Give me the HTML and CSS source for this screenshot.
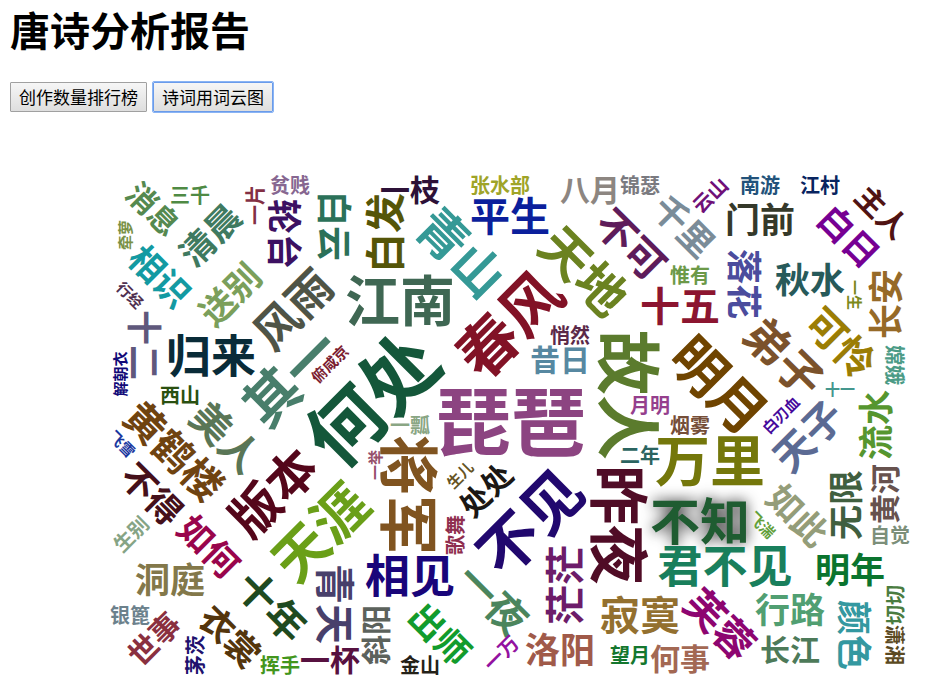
FILE: index.html
```html
<!DOCTYPE html>
<html lang="zh-CN">
<head>
<meta charset="utf-8">
<title>唐诗分析报告</title>
<link rel="stylesheet" href="styles.css">
</head>
<body>
<h1>唐诗分析报告</h1>
<div class="toolbar">
<button type="button" class="tab">创作数量排行榜</button>
<button type="button" class="tab tab-active">诗词用词云图</button>
</div>
<svg class="cloud" viewBox="10 130 918 552" role="img" aria-label="诗词用词云图">
<text dy=".38em" font-size="30" fill="#55894f" transform="translate(153 209) rotate(45)">消息</text>
<text dy=".38em" font-size="20" fill="#4f8a44" transform="translate(190 195)">三千</text>
<text dy=".38em" font-size="20" fill="#832f44" transform="translate(255 205) rotate(-90)">一片</text>
<text dy=".38em" font-size="20" fill="#876791" transform="translate(290 185)">贫贱</text>
<text dy=".38em" font-size="35" fill="#3f7a60" transform="translate(210 235) rotate(-45)">清晨</text>
<text dy=".38em" font-size="15" fill="#7a9146" transform="translate(125 235) rotate(-90)">牵萝</text>
<text dy=".38em" font-size="35" fill="#139aa2" transform="translate(160 276) rotate(45)">相识</text>
<text dy=".38em" font-size="35" fill="#7b9f5b" transform="translate(230 294) rotate(-45)">送别</text>
<text dy=".38em" font-size="15" fill="#503050" transform="translate(130 295) rotate(45)">行经</text>
<text dy=".38em" font-size="35" fill="#5f587c" transform="translate(144 345) rotate(90)">十二</text>
<text dy=".38em" font-size="35" fill="#3c1162" transform="translate(284 234) rotate(90)">轮台</text>
<text dy=".38em" font-size="45" fill="#4f5446" transform="translate(293 309) rotate(-45)">风雨</text>
<text dy=".38em" font-size="35" fill="#2b7159" transform="translate(334 226) rotate(90)">白云</text>
<text dy=".38em" font-size="40" fill="#555508" transform="translate(385 233) rotate(-90)">白发</text>
<text dy=".38em" font-size="30" fill="#2d1138" transform="translate(410 190)">一枝</text>
<text dy=".38em" font-size="20" fill="#9fa428" transform="translate(500 185)">张水部</text>
<text dy=".38em" font-size="50" fill="#359996" transform="translate(461 252) rotate(45)">青山</text>
<text dy=".38em" font-size="40" fill="#0b1f9c" transform="translate(510 216)">平生</text>
<text dy=".38em" font-size="55" fill="#3f6753" transform="translate(400 300)">江南</text>
<text dy=".38em" font-size="60" fill="#821226" transform="translate(509 324) rotate(-45)">春风</text>
<text dy=".38em" font-size="30" fill="#8d8681" transform="translate(590 190)">八月</text>
<text dy=".38em" font-size="20" fill="#7a7a80" transform="translate(640 185)">锦瑟</text>
<text dy=".38em" font-size="35" fill="#7b8c98" transform="translate(684 226) rotate(45)">千里</text>
<text dy=".38em" font-size="20" fill="#6f1078" transform="translate(710 195) rotate(-45)">云山</text>
<text dy=".38em" font-size="40" fill="#5e1c5a" transform="translate(631 244) rotate(45)">不可</text>
<text dy=".38em" font-size="50" fill="#6b8220" transform="translate(584 271) rotate(45)">天地</text>
<text dy=".38em" font-size="20" fill="#6c9948" transform="translate(690 275)">惟有</text>
<text dy=".38em" font-size="40" fill="#8c1530" transform="translate(680 306)">十五</text>
<text dy=".38em" font-size="20" fill="#5b2948" transform="translate(570 335)">悄然</text>
<text dy=".38em" font-size="20" fill="#22527a" transform="translate(760 185)">南游</text>
<text dy=".38em" font-size="20" fill="#082460" transform="translate(820 185)">江村</text>
<text dy=".38em" font-size="35" fill="#35392a" transform="translate(760 220)">门前</text>
<text dy=".38em" font-size="35" fill="#760093" transform="translate(849 236) rotate(45)">白日</text>
<text dy=".38em" font-size="30" fill="#501313" transform="translate(882 212) rotate(45)">主人</text>
<text dy=".38em" font-size="35" fill="#4b4c9d" transform="translate(744 284) rotate(90)">落花</text>
<text dy=".38em" font-size="35" fill="#275a5a" transform="translate(810 280)">秋水</text>
<text dy=".38em" font-size="15" fill="#7b8a1b" transform="translate(855 295) rotate(90)">一生</text>
<text dy=".38em" font-size="35" fill="#966a28" transform="translate(886 304) rotate(-90)">长安</text>
<text dy=".38em" font-size="40" fill="#9b7d04" transform="translate(841 343) rotate(45)">可怜</text>
<text dy=".38em" font-size="45" fill="#7b522b" transform="translate(784 357) rotate(45)">弟子</text>
<text dy=".38em" font-size="20" fill="#4b9b86" transform="translate(895 365) rotate(90)">嫦娥</text>
<text dy=".38em" font-size="15" fill="#45978e" transform="translate(840 389)">十一</text>
<text dy=".38em" font-size="45" fill="#092b38" transform="translate(211 356)">归来</text>
<text dy=".38em" font-size="15" fill="#110a78" transform="translate(120 374) rotate(-90)">解朝衣</text>
<text dy=".38em" font-size="20" fill="#2a5010" transform="translate(180 395)">西山</text>
<text dy=".38em" font-size="40" fill="#6f4310" transform="translate(174 451) rotate(45)">黄鹤楼</text>
<text dy=".38em" font-size="40" fill="#5a7656" transform="translate(226 437) rotate(45)">美人</text>
<text dy=".38em" font-size="15" fill="#1a38a0" transform="translate(122 444) rotate(45)">飞雪</text>
<text dy=".38em" font-size="35" fill="#45101a" transform="translate(152 494) rotate(45)">不得</text>
<text dy=".38em" font-size="50" fill="#54061a" transform="translate(273 492) rotate(-45)">版本</text>
<text dy=".38em" font-size="55" fill="#487e6b" transform="translate(291 377) rotate(-45)">其一</text>
<text dy=".38em" font-size="15" fill="#7b2030" transform="translate(330 364) rotate(-45)">俯咸京</text>
<text dy=".38em" font-size="75" fill="#14573a" transform="translate(372 399) rotate(-45)">何处</text>
<text dy=".38em" font-size="20" fill="#8aa684" transform="translate(410 425)">一瓢</text>
<text dy=".38em" font-size="15" fill="#96506a" transform="translate(375 465) rotate(-90)">一举</text>
<text dy=".38em" font-size="60" fill="#805420" transform="translate(409 495) rotate(90)">将军</text>
<text dy=".38em" font-size="75" fill="#8c4481" transform="translate(511 421)">琵琶</text>
<text dy=".38em" font-size="15" fill="#665423" transform="translate(460 475) rotate(-45)">生儿</text>
<text dy=".38em" font-size="30" fill="#1b1714" transform="translate(486 490) rotate(-45)">处处</text>
<text dy=".38em" font-size="60" fill="#21086e" transform="translate(530 522) rotate(-45)">不见</text>
<text dy=".38em" font-size="30" fill="#5788a1" transform="translate(560 360)">昔日</text>
<text dy=".38em" font-size="65" fill="#5b7b2d" transform="translate(629 395) rotate(90)">故人</text>
<text dy=".38em" font-size="20" fill="#953f8d" transform="translate(650 405)">月明</text>
<text dy=".38em" font-size="20" fill="#754e38" transform="translate(690 425)">烟雾</text>
<text dy=".38em" font-size="20" fill="#2b6460" transform="translate(640 455)">二年</text>
<text dy=".38em" font-size="55" fill="#6f4400" transform="translate(719 385) rotate(45)">明月</text>
<text dy=".38em" font-size="55" fill="#74770b" transform="translate(710 460)">万里</text>
<text dy=".38em" font-size="60" fill="#500c26" transform="translate(619 525) rotate(90)">昨夜</text>
<text class="hovered" dy=".38em" font-size="50" fill="#1f5c31" transform="translate(700 521)">不知</text>
<text dy=".38em" font-size="15" fill="#460a9c" transform="translate(781 415) rotate(-45)">白刃血</text>
<text dy=".38em" font-size="40" fill="#5b6a93" transform="translate(808 436) rotate(-45)">天子</text>
<text dy=".38em" font-size="35" fill="#56962f" transform="translate(876 425) rotate(-90)">流水</text>
<text dy=".38em" font-size="30" fill="#67524e" transform="translate(885 494) rotate(-90)">黄河</text>
<text dy=".38em" font-size="35" fill="#405f3f" transform="translate(846 505) rotate(-90)">无限</text>
<text dy=".38em" font-size="35" fill="#949d79" transform="translate(798 515) rotate(45)">如此</text>
<text dy=".38em" font-size="15" fill="#62a03a" transform="translate(762 525) rotate(45)">飞湍</text>
<text dy=".38em" font-size="20" fill="#7c8f7a" transform="translate(890 535)">自觉</text>
<text dy=".38em" font-size="45" fill="#197f5c" transform="translate(725 566)">君不见</text>
<text dy=".38em" font-size="35" fill="#0a742e" transform="translate(850 570)">明年</text>
<text dy=".38em" font-size="35" fill="#519f72" transform="translate(790 610)">行路</text>
<text dy=".38em" font-size="30" fill="#4d7a59" transform="translate(790 650)">长江</text>
<text dy=".38em" font-size="40" fill="#8d0570" transform="translate(720 624) rotate(45)">芙蓉</text>
<text dy=".38em" font-size="35" fill="#3498a0" transform="translate(854 635) rotate(90)">颜色</text>
<text dy=".38em" font-size="20" fill="#4a7c40" transform="translate(895 605) rotate(-90)">切切</text>
<text dy=".38em" font-size="20" fill="#5b4a22" transform="translate(895 645) rotate(90)">潇湘</text>
<text dy=".38em" font-size="40" fill="#93702f" transform="translate(640 615)">寂寞</text>
<text dy=".38em" font-size="20" fill="#14772e" transform="translate(630 655)">望月</text>
<text dy=".38em" font-size="30" fill="#a36853" transform="translate(680 659)">何事</text>
<text dy=".38em" font-size="45" fill="#19057a" transform="translate(410 576)">相见</text>
<text dy=".38em" font-size="20" fill="#8f2e4e" transform="translate(455 535) rotate(-90)">歌舞</text>
<text dy=".38em" font-size="40" fill="#4b855d" transform="translate(493 599) rotate(45)">一夜</text>
<text dy=".38em" font-size="40" fill="#6d1c69" transform="translate(565 585) rotate(-90)">茫茫</text>
<text dy=".38em" font-size="35" fill="#a05a49" transform="translate(560 650)">洛阳</text>
<text dy=".38em" font-size="35" fill="#129b2c" transform="translate(440 634) rotate(45)">出师</text>
<text dy=".38em" font-size="20" fill="#242118" transform="translate(420 665)">金山</text>
<text dy=".38em" font-size="30" fill="#5c625c" transform="translate(376 635) rotate(-90)">斜阳</text>
<text dy=".38em" font-size="20" fill="#9312a0" transform="translate(501 653) rotate(-45)">一万</text>
<text dy=".38em" font-size="55" fill="#6a9f18" transform="translate(320 532) rotate(-45)">天涯</text>
<text dy=".38em" font-size="35" fill="#99054c" transform="translate(209 546) rotate(45)">如何</text>
<text dy=".38em" font-size="20" fill="#86a485" transform="translate(131 534) rotate(-45)">生别</text>
<text dy=".38em" font-size="35" fill="#83784a" transform="translate(170 580)">洞庭</text>
<text dy=".38em" font-size="20" fill="#6c818c" transform="translate(130 615)">银篦</text>
<text dy=".38em" font-size="30" fill="#8a303f" transform="translate(154 639) rotate(-45)">世事</text>
<text dy=".38em" font-size="20" fill="#20116e" transform="translate(195 655) rotate(-90)">茅茨</text>
<text dy=".38em" font-size="35" fill="#54350c" transform="translate(230 636) rotate(45)">衣裳</text>
<text dy=".38em" font-size="40" fill="#1f4a20" transform="translate(272 606) rotate(45)">十年</text>
<text dy=".38em" font-size="20" fill="#43961d" transform="translate(280 665)">挥手</text>
<text dy=".38em" font-size="40" fill="#48406b" transform="translate(335 604) rotate(90)">青天</text>
<text dy=".38em" font-size="30" fill="#571140" transform="translate(330 660)">一杯</text>
</svg>
</body>
</html>
```
FILE: styles.css
```css
body {
  margin: 0 10px;
  background: #fff;
  color: #000;
  font-family: "Noto Sans CJK SC", sans-serif;
}

h1 {
  margin: 0;
  padding: 1px 0 25px;
  font-size: 40px;
  line-height: 56px;
  font-weight: 700;
}

.toolbar {
  display: flex;
  gap: 6px;
  margin-bottom: 18px;
}

.tab {
  height: 30px;
  padding: 0 8px;
  border: 1px solid #a0a0a0;
  border-radius: 1px;
  background: linear-gradient(#f6f6f6, #dedede);
  color: #000;
  font-family: inherit;
  font-size: 17px;
  font-weight: 400;
  line-height: 28px;
}

.tab-active {
  border-color: #6a9bea;
  outline: 1px solid #8ab4f4;
}

.cloud {
  display: block;
  width: 100%;
  height: auto;
}

.cloud text {
  font-weight: 700;
  text-anchor: middle;
}

.cloud .hovered {
  filter: drop-shadow(0 0 7px rgba(0, 0, 0, 0.85));
}
```
